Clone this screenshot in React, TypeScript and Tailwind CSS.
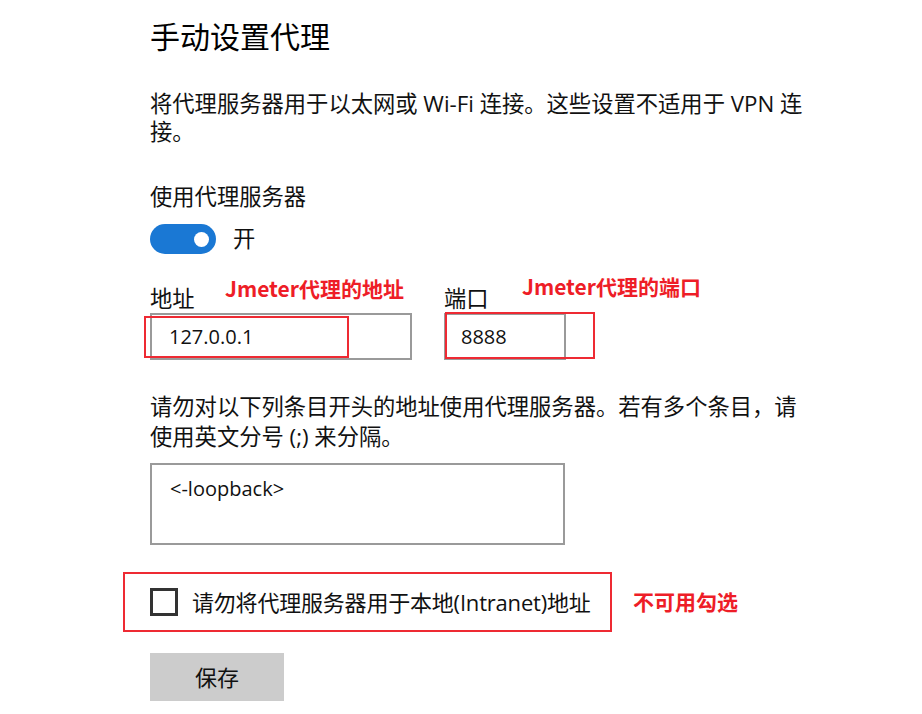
import React from "react";

const base = "font-['Open_Sans','Noto_Sans_CJK_SC',sans-serif]";
const cjkBold = "font-['Noto_Sans_CJK_SC','Open_Sans',sans-serif] font-bold text-[#ee1d27]";

export default function App() {
  return (
    <div className={`${base} w-[922px] h-[714px] bg-white text-[#111] overflow-hidden`}>
      <div className="pl-[150px] pt-[17px] flex flex-col">
        <h1 className="text-[30px] leading-[40px] font-normal text-black">手动设置代理</h1>

        <div className="mt-[33px] text-[22.3px] leading-[28px]">
          <div className="whitespace-nowrap">将代理服务器用于以太网或 Wi-Fi 连接。这些设置不适用于 VPN 连</div>
          <div className="whitespace-nowrap">接。</div>
        </div>

        <div className="mt-[37px] text-[22.3px] leading-[28px]">使用代理服务器</div>

        <div className="mt-[13px] flex items-center gap-[17px]">
          <div className="w-[66px] h-[30px] rounded-full bg-[#1a78d4] flex items-center justify-end pr-[7px]">
            <div className="w-[15px] h-[15px] rounded-full bg-white" />
          </div>
          <span className="text-[22.3px] leading-[28px]">开</span>
        </div>

        <div className="mt-[31px] flex gap-[32px]">
          <div className="flex flex-col w-[262px]">
            <div className="relative text-[22.3px] leading-[28px]">
              地址
              <span className={`absolute left-[75px] top-[-11px] whitespace-nowrap text-[21px] leading-[28px] ${cjkBold}`}>
                Jmeter代理的地址
              </span>
            </div>
            <div className="relative h-[47px] border-2 border-[#9a9a9a] flex items-center pl-[17px] text-[20px]">
              127.0.0.1
              <div className="absolute left-[-8px] top-[1px] w-[205px] h-[42px] border-2 border-[#ee2a33]" />
            </div>
          </div>
          <div className="flex flex-col w-[122px]">
            <div className="relative text-[22.3px] leading-[28px]">
              端口
              <span className={`absolute left-[78px] top-[-13px] whitespace-nowrap text-[21px] leading-[28px] ${cjkBold}`}>
                Jmeter代理的端口
              </span>
            </div>
            <div className="relative h-[47px] border-2 border-[#9a9a9a] flex items-center pl-[15px] text-[20px]">
              8888
              <div className="absolute left-[-1px] top-[-3px] w-[150px] h-[47px] border-2 border-[#ee2a33]" />
            </div>
          </div>
        </div>

        <div className="mt-[32px] text-[22.3px] leading-[30px]">
          <div className="whitespace-nowrap">请勿对以下列条目开头的地址使用代理服务器。若有多个条目，请</div>
          <div className="whitespace-nowrap">使用英文分号 (;) 来分隔。</div>
        </div>

        <div className="mt-[11px] w-[415px] h-[82px] border-2 border-[#9a9a9a] pl-[18px] pt-[10px] text-[20px] leading-[28px]">
          &lt;-loopback&gt;
        </div>

        <div className="relative mt-[27px] h-[60px] flex items-center gap-[14px]">
          <div className="w-[28px] h-[28px] border-[3px] border-[#333]" />
          <span className="text-[22px] leading-[28px] whitespace-nowrap tracking-[-0.2px]">请勿将代理服务器用于本地(Intranet)地址</span>
          <div className="absolute left-[-27px] top-0 w-[489px] h-[60px] border-2 border-[#ee2a33]" />
          <span className={`absolute left-[483px] top-[15px] text-[21px] leading-[28px] whitespace-nowrap ${cjkBold}`}>
            不可用勾选
          </span>
        </div>

        <div className="mt-[21px] w-[134px] h-[48px] bg-[#cccccc] flex items-center justify-center text-[22px]">
          保存
        </div>
      </div>
    </div>
  );
}
